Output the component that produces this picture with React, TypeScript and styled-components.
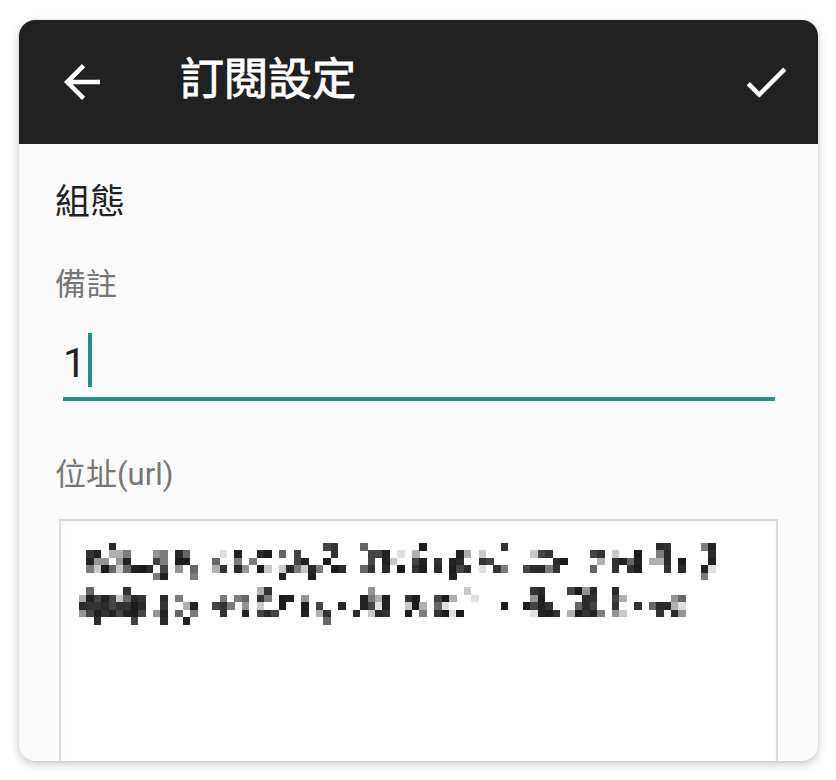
import React from "react";
import styled, { createGlobalStyle } from "styled-components";

const Global = createGlobalStyle`
  html, body { margin: 0; padding: 0; background: #ffffff; }
  body {
    padding: 20px 18px 19px 19px;
    font-family: Roboto, "Noto Sans CJK TC", sans-serif;
  }
  * { box-sizing: border-box; }
`;

const Card = styled.div`
  width: 799px;
  height: 741px;
  border-radius: 16px;
  overflow: hidden;
  background: #fafafa;
  box-shadow: 0 3px 10px rgba(0, 0, 0, 0.22), 0 0 2px rgba(0, 0, 0, 0.08);
  display: flex;
  flex-direction: column;
`;

const Toolbar = styled.header`
  height: 124px;
  flex: none;
  background: #212121;
  display: flex;
  align-items: center;
  padding: 0 25px 0 36px;
  color: #fff;
`;

const IconButton = styled.svg`
  width: 54px;
  height: 54px;
  flex: none;
  fill: #fff;
`;

const Title = styled.h1`
  margin: 0 0 4px 71px;
  font-size: 44px;
  line-height: 44px;
  font-weight: 400;
  -webkit-text-stroke: 0.9px #ffffff;
  letter-spacing: 0;
  flex: 1;
  font-family: Roboto, "Noto Sans CJK TC", sans-serif;
`;

const Content = styled.main`
  flex: 1;
  padding: 41px 40px 0 36px;
  display: flex;
  flex-direction: column;
`;

const SectionTitle = styled.div`
  font-size: 35px;
  line-height: 35px;
  color: #212121;
`;

const Label = styled.div<{ $gap: number }>`
  margin-top: ${(p) => p.$gap}px;
  font-size: 31px;
  line-height: 31px;
  color: #777777;
`;

const InputField = styled.div`
  margin: 33px 3px 0 8px;
  padding-bottom: 10px;
  border-bottom: 4px solid #219386;
  display: flex;
  align-items: flex-start;
`;

const Value = styled.span`
  font-family: Roboto, sans-serif;
  font-size: 41px;
  line-height: 48px;
  padding-top: 6px;
  color: #212121;
`;

const Caret = styled.span`
  width: 4px;
  height: 54px;
  margin-left: 2px;
  background: #219386;
`;

const TextArea = styled.div`
  margin: 29px 0 0 4px;
  flex: 1;
  min-height: 260px;
  background: #ffffff;
  border: 2px solid #dcdcdc;
  border-bottom: none;
  box-shadow: inset 0 3px 4px rgba(0, 0, 0, 0.035), inset 3px 0 4px rgba(0, 0, 0, 0.02);
  padding: 22px 0 0 18px;
`;

const Mosaic = styled.svg`
  display: block;
  filter: blur(0.35px);
`;

function mulberry32(a: number) {
  return function () {
    a |= 0;
    a = (a + 0x6d2b79f5) | 0;
    let t = Math.imul(a ^ (a >>> 15), 1 | a);
    t = (t + Math.imul(t ^ (t >>> 7), 61 | t)) ^ t;
    return ((t ^ (t >>> 14)) >>> 0) / 4294967296;
  };
}

const CELL = 7.4;
const dark = ["#1c1c1c", "#222", "#2a2a2a", "#333", "#444"];
const light = ["#666", "#7c7c7c", "#959595", "#b0b0b0", "#c9c9c9", "#e0e0e0"];

function buildLine(seed: number, cols: number, top: number) {
  const rnd = mulberry32(seed);
  const rects: { x: number; y: number; c: string }[] = [];
  const rowP = [0.16, 0.42, 0.55, 0.62, 0.1];
  const pick = (arr: string[]) => arr[Math.floor(rnd() * arr.length)];
  let col = 0;
  while (col < cols) {
    const wordLen = 3 + Math.floor(rnd() * 10);
    for (let i = 0; i < wordLen && col < cols; i++, col++) {
      const kind = rnd();
      if (kind < 0.22) {
        const start = rnd() < 0.35 ? 0 : 1;
        for (let r = start; r < 4; r++) {
          rects.push({ x: col * CELL, y: top + r * CELL, c: rnd() < 0.75 ? pick(dark) : pick(light) });
        }
        if (rnd() < 0.12) rects.push({ x: col * CELL, y: top + 4 * CELL, c: pick(dark) });
      } else if (kind < 0.33) {
        continue;
      } else {
        for (let r = 0; r < 5; r++) {
          if (rnd() < rowP[r]) {
            rects.push({ x: col * CELL, y: top + r * CELL, c: rnd() < 0.62 ? pick(dark) : pick(light) });
          }
        }
      }
    }
    const gap = 1 + Math.floor(rnd() * 2);
    for (let g = 0; g < gap && col < cols; g++, col++) {
      if (rnd() < 0.3) {
        rects.push({ x: col * CELL, y: top + (1 + Math.floor(rnd() * 3)) * CELL, c: pick(light) });
      }
    }
  }
  return rects;
}

const line1 = buildLine(20240, 87, 0);
const line2 = buildLine(771, 82, 6 * CELL);
const cells = [...line1, ...line2];

export default function App() {
  return (
    <>
      <Global />
      <Card>
        <Toolbar>
          <IconButton viewBox="0 0 24 24" aria-label="返回">
            <path d="M20 11H7.83l5.59-5.59L12 4l-8 8 8 8 1.41-1.41L7.83 13H20v-2z" />
          </IconButton>
          <Title>訂閱設定</Title>
          <IconButton viewBox="0 0 24 24" aria-label="完成">
            <path d="M9 16.17L4.83 12l-1.42 1.41L9 19 21 7l-1.41-1.41z" />
          </IconButton>
        </Toolbar>
        <Content>
          <SectionTitle>組態</SectionTitle>
          <Label $gap={49}>備註</Label>
          <InputField>
            <Value>1</Value>
            <Caret />
          </InputField>
          <Label $gap={58}>位址(url)</Label>
          <TextArea>
            <Mosaic width={650} height={82} viewBox="0 0 650 82" shapeRendering="crispEdges">
              {cells.map((r, i) => (
                <rect key={i} x={r.x} y={r.y} width={CELL + 0.2} height={CELL + 0.2} fill={r.c} />
              ))}
            </Mosaic>
          </TextArea>
        </Content>
      </Card>
    </>
  );
}
